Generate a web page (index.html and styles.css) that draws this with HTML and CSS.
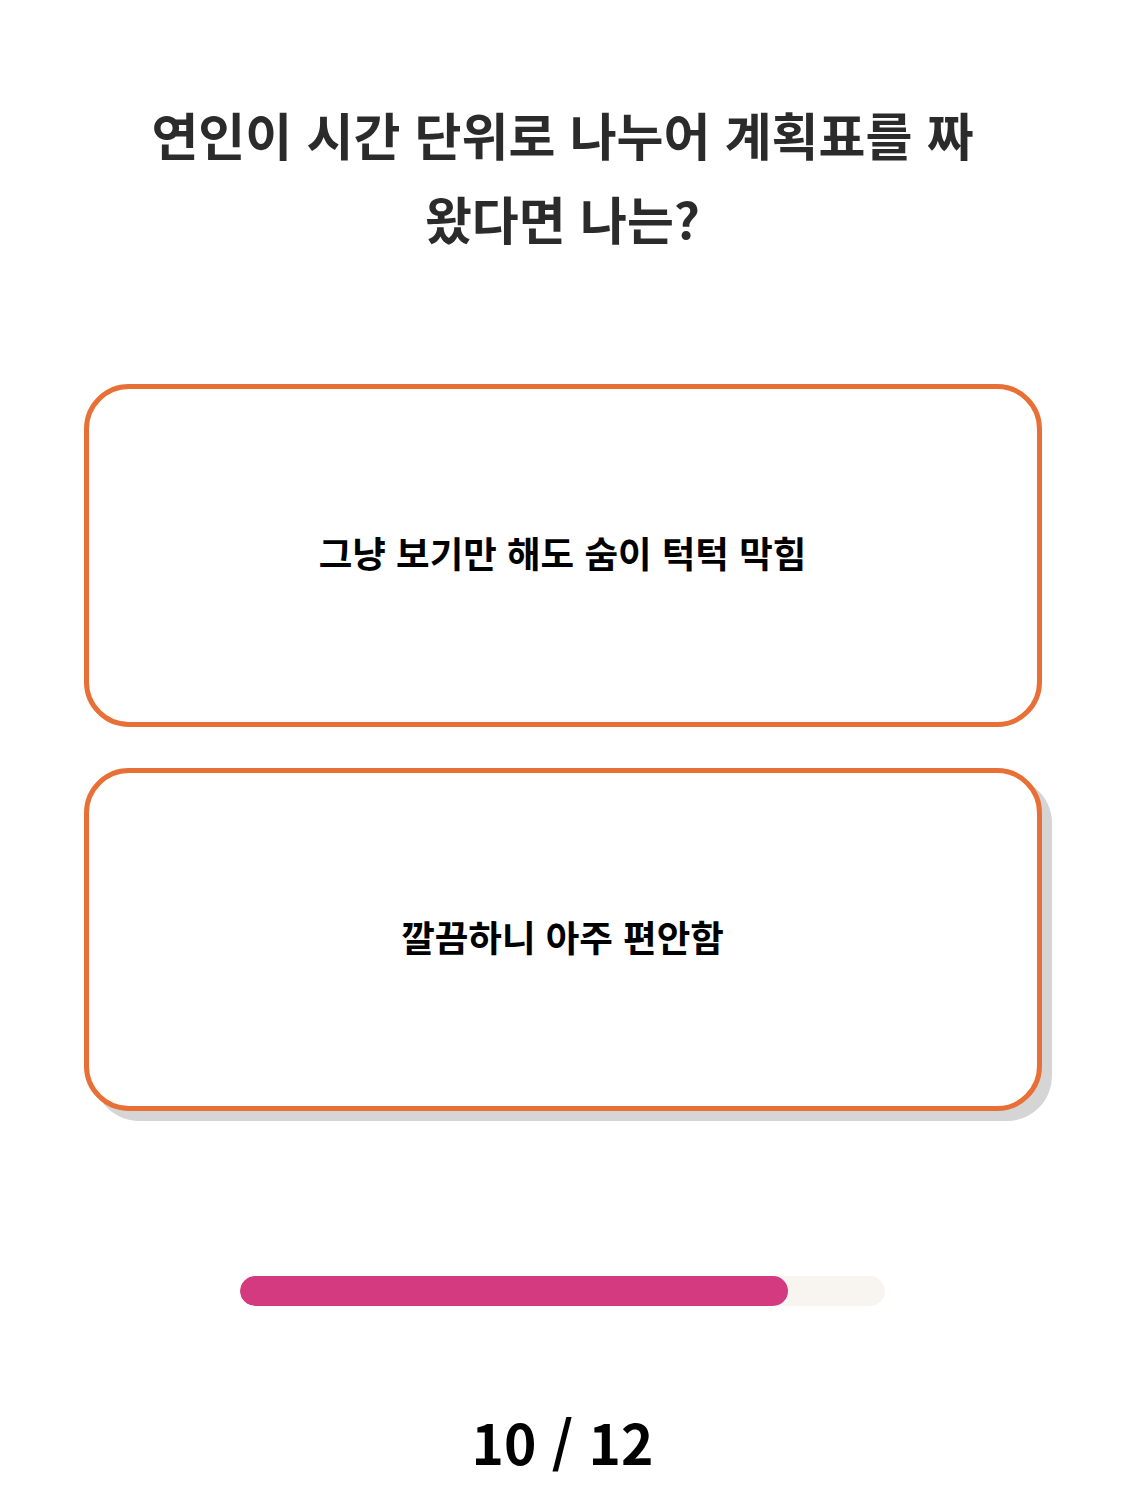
FILE: index.html
```html
<!DOCTYPE html>
<html lang="ko">
<head>
    <meta charset="UTF-8">
    <meta name="viewport" content="width=device-width, initial-scale=1.0">
    <title>연애 성향 테스트</title>
    <link rel="stylesheet" href="styles.css">
</head>
<body>
    <div class="quiz">
        <h1 class="question">연인이 시간 단위로 나누어 계획표를 짜<br>왔다면 나는?</h1>

        <div class="answers">
            <button class="answer">그냥 보기만 해도 숨이 턱턱 막힘</button>
            <button class="answer active">깔끔하니 아주 편안함</button>
        </div>

        <div class="progress">
            <div class="progress-fill" style="width: 85%"></div>
        </div>

        <div class="count">10 / 12</div>
    </div>
</body>
</html>
```

FILE: styles.css
```css
body {
    margin: 0;
    font-family: "Noto Sans CJK KR", sans-serif;
    background: #fff;
    color: #000;
}
.quiz {
    width: 958px;
    margin: 0 auto;
    padding-top: 92px;
    display: flex;
    flex-direction: column;
    align-items: center;
}
.question {
    margin: 0;
    font-size: 51px;
    font-weight: bold;
    line-height: 84px;
    color: #2b2b2b;
    text-align: center;
}
.answers {
    width: 100%;
    margin-top: 124px;
    display: flex;
    flex-direction: column;
    gap: 41px;
}
.answer {
    height: 343px;
    padding-bottom: 8px;
    background: #fff;
    border: 5px solid #e86f35;
    border-radius: 45px;
    font-family: inherit;
    font-size: 36.5px;
    font-weight: bold;
    color: #000;
    cursor: pointer;
}
.answer.active {
    box-shadow: 10px 10px 0 #d5d5d5;
}
.progress {
    width: 645px;
    height: 30px;
    margin-top: 165px;
    background: #f8f5f1;
    border-radius: 15px;
    overflow: hidden;
}
.progress-fill {
    height: 100%;
    background: #d33a7f;
    border-radius: 15px;
}
.count {
    margin-top: 102px;
    font-size: 55px;
    font-weight: bold;
    line-height: 66px;
}
```
